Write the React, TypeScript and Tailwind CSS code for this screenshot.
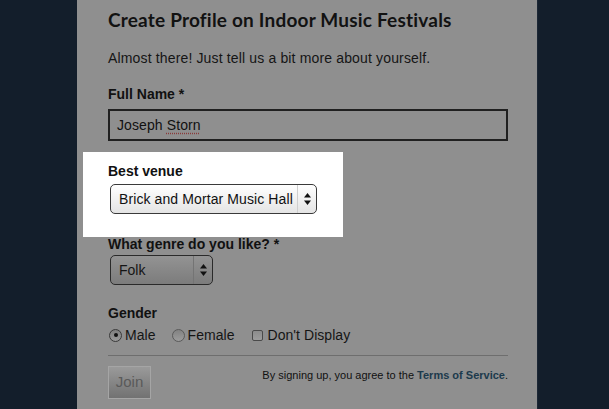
export default function App() {
  return (
    <div className="w-[609px] h-[409px] overflow-hidden bg-[#131e2b] font-['Liberation_Sans',Arial,sans-serif] text-[#111]">
      <div className="ml-[77px] w-[461px] h-full bg-[#8f8f8f] pl-[31px] pr-[30px] pt-[8px] border-r border-[#1c2735]">
        {/* Header */}
        <h1 className="text-[19px] leading-[24px] font-bold tracking-[0.2px] font-['Lato',sans-serif] text-[#121212]">
          Create Profile on Indoor Music Festivals
        </h1>
        <p className="mt-[18px] text-[14px] leading-[16px] tracking-[0.15px] text-[#151515]">
          Almost there! Just tell us a bit more about yourself.
        </p>

        {/* Full name */}
        <label className="block mt-[20px] text-[14px] leading-[16px] font-bold">Full Name *</label>
        <div className="mt-[7px] h-[32px] w-[400px] border-2 border-[#202020] flex items-center px-[7px] text-[14px] tracking-[0.1px]">
          Joseph{' '}
          <span className="ml-[4px] underline decoration-dotted decoration-[#8a3a3a] underline-offset-[3px]">Storn</span>
        </div>

        {/* Highlighted field */}
        <div className="mt-[11px] -ml-[25px] w-[260px] h-[85px] bg-white pl-[25px] pt-[11px]">
          <label className="block text-[14px] leading-[16px] font-bold text-[#111]">Best venue</label>
          <div className="mt-[5px] ml-[2px] w-[207px] h-[30px] rounded-[5px] border border-[#3a3a3a] bg-gradient-to-b from-[#ffffff] to-[#e4e4e4] flex items-center">
            <span className="flex-1 pl-[8px] text-[14px] tracking-[0.1px] text-[#111] whitespace-nowrap">Brick and Mortar Music Hall</span>
            <div className="w-[19px] h-full border-l border-[#cfcfcf] flex items-center justify-center">
              <svg width="7" height="12" viewBox="0 0 7 12">
                <path d="M3.5 0 L7 4.5 L0 4.5 Z" fill="#111" />
                <path d="M3.5 12 L7 7.5 L0 7.5 Z" fill="#111" />
              </svg>
            </div>
          </div>
        </div>

        {/* Genre */}
        <label className="block -mt-[1px] text-[14px] leading-[16px] font-bold">What genre do you like? *</label>
        <div className="mt-[3px] ml-[2px] w-[103px] h-[30px] rounded-[5px] border border-[#2a2a2a] bg-gradient-to-b from-[#939393] to-[#7c7c7c] flex items-center">
          <span className="flex-1 pl-[8px] text-[14px] text-[#151515]">Folk</span>
          <div className="w-[19px] h-full border-l border-[#747474] flex items-center justify-center">
            <svg width="7" height="12" viewBox="0 0 7 12">
              <path d="M3.5 0 L7 4.5 L0 4.5 Z" fill="#111" />
              <path d="M3.5 12 L7 7.5 L0 7.5 Z" fill="#111" />
            </svg>
          </div>
        </div>

        {/* Gender */}
        <label className="block mt-[20px] text-[14px] leading-[16px] font-bold">Gender</label>
        <div className="mt-[6px] flex items-center text-[14px] leading-[16px] tracking-[0.05px] text-[#151515]">
          <span className="ml-[1px] w-[13px] h-[13px] rounded-full border border-[#3a3a3a] bg-gradient-to-b from-[#7e7e7e] to-[#9a9a9a] flex items-center justify-center">
            <span className="w-[4px] h-[4px] rounded-full bg-[#111]" />
          </span>
          <span className="ml-[3px]">Male</span>
          <span className="ml-[16px] w-[13px] h-[13px] rounded-full border border-[#5a5a5a] bg-gradient-to-b from-[#828282] to-[#9c9c9c]" />
          <span className="ml-[3px]">Female</span>
          <span className="ml-[17px] w-[11px] h-[11px] rounded-[2px] border border-[#4a4a4a] bg-gradient-to-b from-[#8c8c8c] to-[#9c9c9c]" />
          <span className="ml-[5px]">Don't Display</span>
        </div>

        <div className="mt-[12px] h-px w-[400px] bg-[#6e6e6e]" />

        {/* Footer */}
        <div className="mt-[10px] w-[400px] flex items-start justify-between">
          <button className="w-[43px] h-[33px] border border-[#a5a5a5] bg-gradient-to-b from-[#9a9a9a] to-[#727272] text-[15px] text-[#5a5a5a] font-['Liberation_Sans',sans-serif]">
            Join
          </button>
          <p className="mt-[3px] text-[11px] leading-[13px] text-[#111]">
            By signing up, you agree to the{' '}
            <span className="font-bold text-[#1c3a4c]">Terms of Service</span>.
          </p>
        </div>
      </div>
    </div>
  );
}
